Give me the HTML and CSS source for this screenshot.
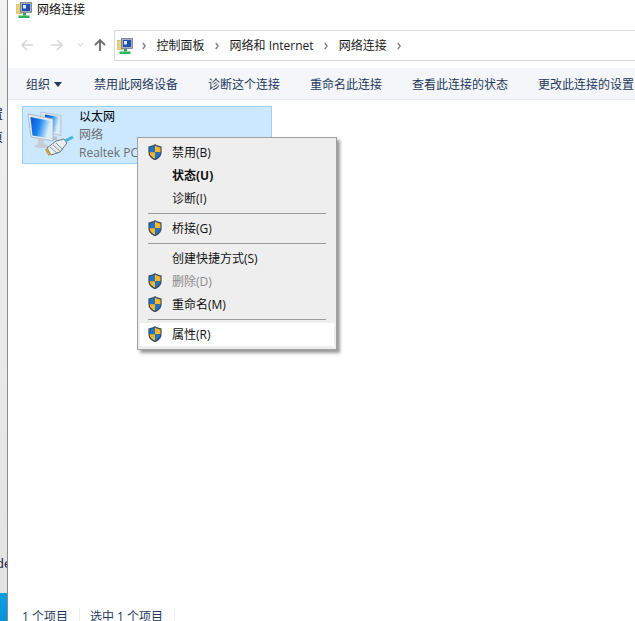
FILE: index.html
```html
<!DOCTYPE html>
<html lang="zh-CN">
<head>
<meta charset="utf-8">
<title>网络连接</title>
<link rel="stylesheet" href="styles.css">
</head>
<body>
<svg class="defs" width="0" height="0" aria-hidden="true">
  <defs>
    <linearGradient id="screen" x1="0" y1="0" x2="1" y2=".3">
      <stop offset="0" stop-color="#0a4fd6"/>
      <stop offset=".5" stop-color="#1c86ee"/>
      <stop offset="1" stop-color="#d8eefc"/>
    </linearGradient>
    <symbol id="shield" viewBox="1 .5 14 16.500">
      <path d="M8 .6C6 2 4 2.800 1.200 3v6.200c0 3.600 2.600 6.400 6.800 8.200 4.200-1.800 6.800-4.600 6.800-8.200V3C12 2.800 10 2 8 .6z" fill="#3c4d66"/>
      <path d="M8 2C6.200 3.100 4.400 3.800 2.400 4v5H8z" fill="#1f74c9"/>
      <path d="M8 2c1.800 1.100 3.600 1.800 5.600 2v5H8z" fill="#f7b622"/>
      <path d="M2.400 9c.2 2.800 2.300 5.200 5.600 6.800V9z" fill="#f7b622"/>
      <path d="M13.600 9c-.2 2.800-2.300 5.200-5.600 6.800V9z" fill="#1f74c9"/>
    </symbol>
    <symbol id="net" viewBox="0 0 16 16">
      <path d="M0 2.500h3l1-1h2v10H.5z" fill="#ecd27a" stroke="#c9ab52" stroke-width=".6"/>
      <rect x="4.500" y=".5" width="11" height="10" fill="#a7afbb" stroke="#6f7a8a" stroke-width=".8"/>
      <rect x="6" y="2" width="8" height="7" fill="#1f4fb0"/>
      <rect x="7" y="3" width="3" height="3.500" fill="#dce9f9"/>
      <rect x="7" y="11" width="3" height="2.500" fill="#3a9b52"/>
      <rect x="2.500" y="13.500" width="11" height="2.500" fill="#2fb45d"/>
    </symbol>
  </defs>
</svg>
<div class="desktop-strip">
  <span class="strip-text strip-a">置</span>
  <span class="strip-text strip-b">页</span>
  <span class="strip-text strip-c">de</span>
  <div class="strip-blue"></div>
</div>
<main class="window">
  <header class="titlebar">
    <svg class="icon-16"><use href="#net"/></svg>
    <span>网络连接</span>
  </header>
  <nav class="navbar">
    <div class="nav-buttons">
      <svg class="nav-arrow" viewBox="0 0 14 14"><path d="M13 7H2M7 2 2 7l5 5" fill="none" stroke="#d6d6d6" stroke-width="1.600"/></svg>
      <svg class="nav-arrow" viewBox="0 0 14 14"><path d="M1 7h11M7 2l5 5-5 5" fill="none" stroke="#d6d6d6" stroke-width="1.600"/></svg>
      <svg class="nav-caret" viewBox="0 0 8 6"><path d="M1 1l3 3 3-3" fill="none" stroke="#d6d6d6" stroke-width="1.200"/></svg>
      <svg class="nav-arrow" viewBox="0 0 14 14"><path d="M7 13V2M2 7l5-5 5 5" fill="none" stroke="#6d6d6d" stroke-width="1.900"/></svg>
    </div>
    <div class="address">
      <svg class="icon-16 addr-icon"><use href="#net"/></svg>
      <svg class="chev" viewBox="0 0 4 8"><path d="M.8 1l2.400 3-2.400 3" fill="none" stroke="#808080" stroke-width="1.400"/></svg>
      <span>控制面板</span>
      <svg class="chev" viewBox="0 0 4 8"><path d="M.8 1l2.400 3-2.400 3" fill="none" stroke="#808080" stroke-width="1.400"/></svg>
      <span>网络和 Internet</span>
      <svg class="chev" viewBox="0 0 4 8"><path d="M.8 1l2.400 3-2.400 3" fill="none" stroke="#808080" stroke-width="1.400"/></svg>
      <span>网络连接</span>
      <svg class="chev" viewBox="0 0 4 8"><path d="M.8 1l2.400 3-2.400 3" fill="none" stroke="#808080" stroke-width="1.400"/></svg>
    </div>
  </nav>
  <div class="toolbar">
    <span class="tool org">组织<i class="tri"></i></span>
    <span class="tool">禁用此网络设备</span>
    <span class="tool">诊断这个连接</span>
    <span class="tool">重命名此连接</span>
    <span class="tool">查看此连接的状态</span>
    <span class="tool">更改此连接的设置</span>
  </div>
  <section class="content">
    <div class="tile">
      <svg class="tile-icon" viewBox="0 0 48 48">
        <path d="M15 2l20 3.500v20L15 22z" fill="#dbe4ed" stroke="#a3b3c4" stroke-width=".6"/>
        <path d="M19 4.500l14 2.500v16.500l-14-2.500z" fill="url(#screen)"/>
        <path d="M26 26l5 .8v3l-5 .5z" fill="#b9c3cd"/>
        <path d="M2 4l25 5v22L5 27z" fill="#e4eaf0" stroke="#9fb0c2" stroke-width=".8"/>
        <path d="M4.500 7l20 4v17.500L6.500 25.500z" fill="url(#screen)"/>
        <path d="M12 28.500l6 1v4l5 2.500c-1 3-13 3-15 0l4-2z" fill="#c6cdd4"/>
        <path d="M21 38l9-7 8-2 3 4-7 9-9 3z" fill="#e9edf0" stroke="#6f7a83" stroke-width="1"/>
        <path d="M24 37l8 7M27 35l8 7M30 33l7 7" stroke="#7c8790" stroke-width=".9"/>
        <path d="M21 38l4 7-2.500.8-3.500-6z" fill="#c4a445"/>
        <path d="M39 31l8-4" stroke="#45b8dc" stroke-width="3"/>
      </svg>
      <div class="tile-text">
        <div class="tile-name">以太网</div>
        <div class="tile-sub">网络</div>
        <div class="tile-sub">Realtek PCIe GbE Family Controller</div>
      </div>
    </div>
  </section>
  <footer class="status">
    <span class="status-item">1 个项目</span>
    <span class="status-item">选中 1 个项目</span>
  </footer>
</main>
<ul class="menu">
  <li class="item"><svg class="shield"><use href="#shield"/></svg>禁用(B)</li>
  <li class="item bold">状态(U)</li>
  <li class="item">诊断(I)</li>
  <li class="sep"></li>
  <li class="item"><svg class="shield"><use href="#shield"/></svg>桥接(G)</li>
  <li class="sep"></li>
  <li class="item">创建快捷方式(S)</li>
  <li class="item disabled"><svg class="shield"><use href="#shield"/></svg>删除(D)</li>
  <li class="item"><svg class="shield"><use href="#shield"/></svg>重命名(M)</li>
  <li class="sep"></li>
  <li class="item hot"><svg class="shield"><use href="#shield"/></svg>属性(R)</li>
</ul>
</body>
</html>
```
FILE: styles.css
```css
* { box-sizing: border-box; }
html, body { height: 100%; }
body {
  margin: 0;
  display: flex;
  overflow: hidden;
  background: #fff;
  font: 12px/16px "Open Sans", "Noto Sans CJK SC", sans-serif;
  color: #1a1a1a;
}
.defs { position: absolute; }
.desktop-strip {
  flex: 0 0 8px;
  position: relative;
  overflow: hidden;
  background: linear-gradient(#f2f2f2, #e2e2e2);
  border-right: 1px solid #8c8c8c;
}
.strip-text { position: absolute; color: #14143c; }
.strip-a { top: 107px; left: -9px; }
.strip-b { top: 130px; left: -9px; }
.strip-c { top: 555px; left: -4px; font-size: 13px; }
.strip-blue {
  position: absolute;
  left: 0; right: 0; top: 593px; bottom: 0;
  background: linear-gradient(#0a9fe6, #0b93da);
}
.window { flex: 1; min-width: 0; display: flex; flex-direction: column; }
.titlebar {
  height: 19px;
  display: flex;
  align-items: center;
  gap: 5px;
  padding-left: 8px;
  color: #111;
}
.icon-16 { width: 16px; height: 16px; flex: none; }
.navbar { height: 49px; display: flex; align-items: flex-start; padding-top: 11px; }
.nav-buttons { display: flex; align-items: center; width: 106px; height: 30px; padding-left: 12px; }
.nav-arrow { width: 14px; height: 14px; margin-right: 16px; flex: none; }
.nav-caret { width: 7px; height: 6px; margin: 0 9px 0 -3px; flex: none; }
.nav-arrow:last-child { margin: 0; }
.address {
  flex: 1;
  height: 31px;
  display: flex;
  align-items: center;
  gap: 10.500px;
  padding-left: 2px;
  margin-right: -8px;
  border: 1px solid #d9d9d9;
  border-right: 0;
}
.addr-icon { margin-right: -1.500px; }
.chev { width: 4px; height: 8px; flex: none; }
.toolbar {
  height: 32px;
  display: flex;
  align-items: center;
  gap: 30px;
  padding: 2px 0 0 18px;
  background: #f4f6f9;
  border-bottom: 1px solid #e7e9ec;
  color: #1e395b;
  white-space: nowrap;
}
.org { display: flex; align-items: center; gap: 4px; margin-right: 2px; }
.tri {
  width: 0; height: 0;
  border-left: 4.500px solid transparent;
  border-right: 4.500px solid transparent;
  border-top: 5px solid #1e395b;
}
.content { flex: 1; padding: 6px 0 0 14px; }
.tile {
  width: 250px;
  height: 58px;
  display: flex;
  gap: 5px;
  padding: 3px 0 0 3px;
  overflow: hidden;
  background: #cce8ff;
  border: 1px solid #99d1ff;
}
.tile-icon { width: 48px; height: 48px; flex: none; }
.tile-text { white-space: nowrap; line-height: 18px; margin-top: -2px; }
.tile-name { color: #000; }
.tile-sub { color: #6d6d6d; }
.status { height: 12px; display: flex; overflow: hidden; padding-left: 14px; color: #1e395b; }
.status-item { line-height: 16px; padding: 0 11px 0 10px; border-right: 1px solid #eeeeee; }
.status-item:first-child { padding: 0 11px 0 0; }
.menu {
  position: absolute;
  left: 137px;
  top: 137px;
  width: 200px;
  margin: 0;
  padding: 3px 2px;
  list-style: none;
  background: #eeeeee;
  border: 1px solid #a0a0a0;
  box-shadow: 3px 3px 3px rgba(0, 0, 0, .4);
  color: #111;
}
.item {
  position: relative;
  height: 23px;
  line-height: 23px;
  padding-left: 32px;
}
.shield { position: absolute; left: 8px; top: 3px; width: 14px; height: 16px; }
.bold { font-weight: 700; }
.disabled { color: #8a8a8a; }
.hot { background: #fff; }
.sep { height: 7px; position: relative; }
.sep::after {
  content: "";
  position: absolute;
  left: 8px; right: 8px; top: 3px;
  height: 1px;
  background: #9a9a9a;
}
```
